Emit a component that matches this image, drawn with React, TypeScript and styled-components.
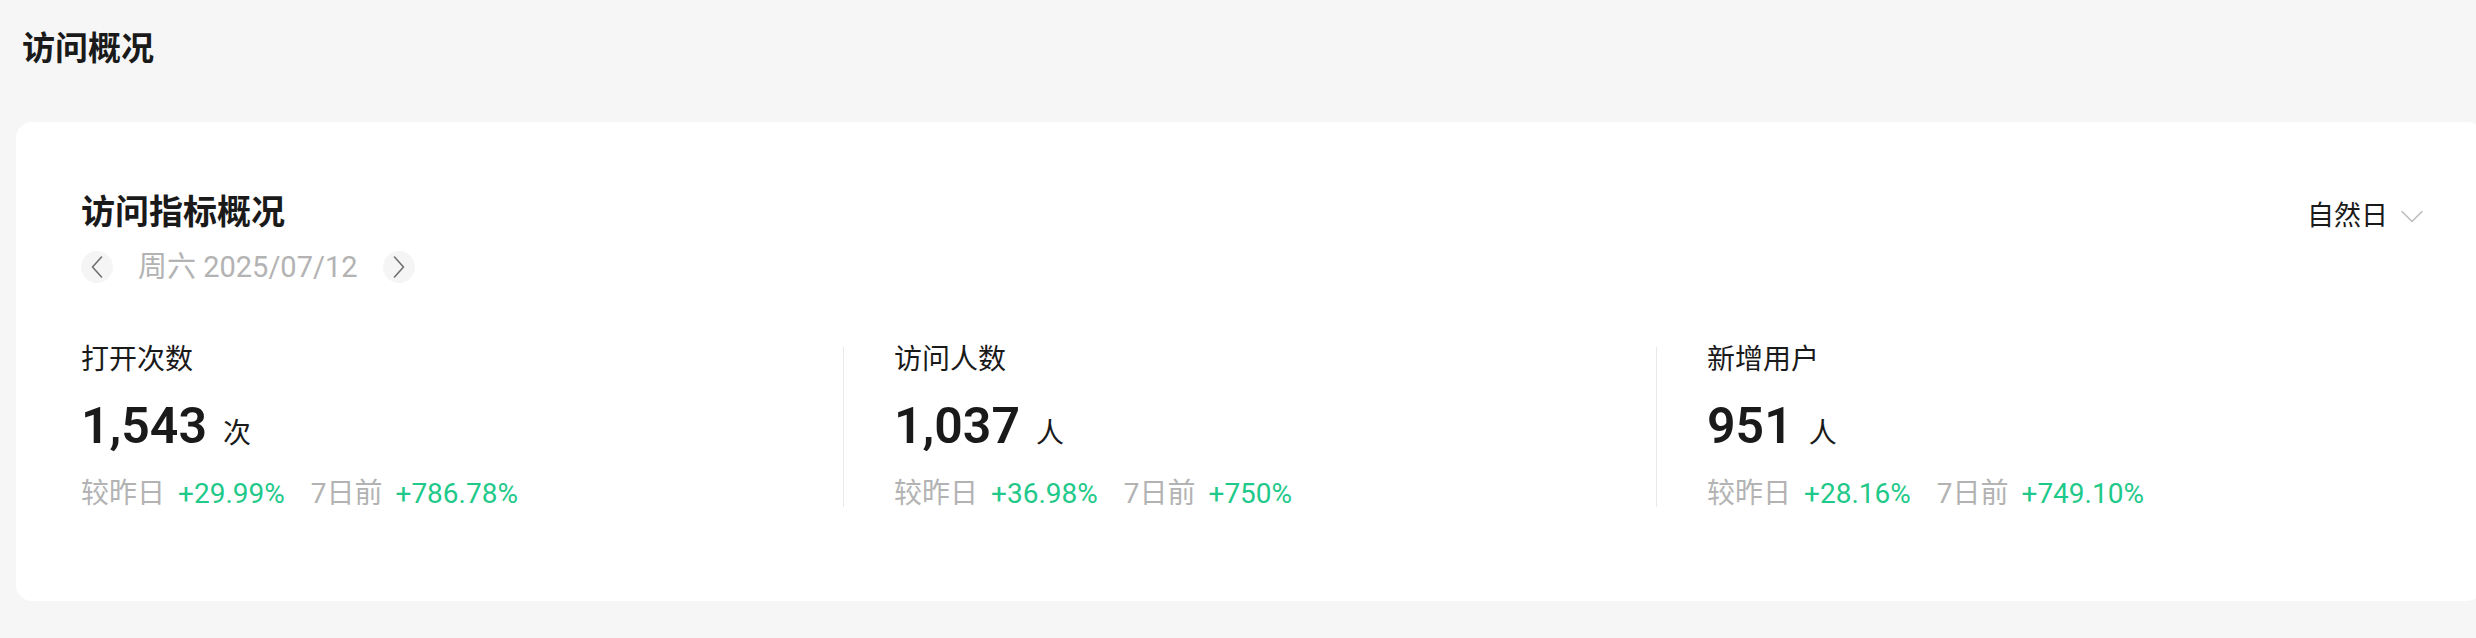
import React from "react";
import styled, { createGlobalStyle } from "styled-components";

const GlobalStyle = createGlobalStyle`
  html, body {
    margin: 0;
    padding: 0;
    background: #f6f6f6;
    overflow: hidden;
  }
  body {
    font-family: "Roboto", "Noto Sans CJK SC", sans-serif;
    color: #1a1a1a;
  }
  * { box-sizing: border-box; }
`;

const Page = styled.div`
  padding: 0 0 0 16px;
`;

const PageTitle = styled.h1`
  margin: 0;
  padding: 25px 0 0 6px;
  font-size: 33px;
  line-height: 48px;
  font-weight: 600;
  color: #1a1a1a;
`;

const Card = styled.section`
  margin-top: 49px;
  margin-right: -7px;
  background: #ffffff;
  border-radius: 16px;
  padding: 66px 64px 87px 65px;
`;

const CardHeader = styled.div`
  display: flex;
  justify-content: space-between;
  align-items: flex-start;
`;

const HeaderLeft = styled.div`
  display: flex;
  flex-direction: column;
`;

const CardTitle = styled.h2`
  margin: 0;
  font-size: 34px;
  line-height: 48px;
  font-weight: 600;
  color: #1a1a1a;
`;

const DateRow = styled.div`
  display: flex;
  align-items: center;
  margin-top: 15px;
`;

const CircleButton = styled.button`
  width: 32px;
  height: 32px;
  border: none;
  border-radius: 50%;
  background: #f5f5f5;
  padding: 0;
  display: flex;
  align-items: center;
  justify-content: center;
  cursor: pointer;
`;

const DateText = styled.span`
  margin: 0 25px;
  font-size: 29px;
  line-height: 32px;
  color: #b3b3b3;
`;

const Dropdown = styled.div`
  display: flex;
  align-items: center;
  gap: 13px;
  margin-top: 12px;
  margin-right: -4px;
  font-size: 27px;
  line-height: 32px;
  color: #1a1a1a;
  cursor: pointer;
`;

const Metrics = styled.div`
  display: flex;
  margin-top: 57px;
`;

const Metric = styled.div`
  flex: 1;
  display: flex;
  flex-direction: column;
`;

const Divider = styled.div`
  width: 1px;
  height: 160px;
  align-self: center;
  background: #e9e9e9;
  margin: 0 50px;
`;

const MetricLabel = styled.div`
  font-size: 28px;
  line-height: 40px;
  color: #1a1a1a;
`;

const ValueRow = styled.div`
  margin-top: 16px;
  display: flex;
  align-items: baseline;
  gap: 16px;
  line-height: 60px;
`;

const Value = styled.span`
  font-size: 50px;
  font-weight: 600;
  color: #1a1a1a;
`;

const Unit = styled.span`
  font-size: 28px;
  color: #1a1a1a;
`;

const CompareRow = styled.div`
  margin-top: 10px;
  display: flex;
  gap: 26px;
  font-size: 28px;
  line-height: 40px;
`;

const CompareItem = styled.div`
  display: flex;
  gap: 13px;
`;

const CompareLabel = styled.span`
  color: #b3b3b3;
`;

const CompareValue = styled.span<{ $up: boolean }>`
  color: ${(p) => (p.$up ? "#1fc98a" : "#f5504f")};
`;

const ChevronLeft = () => (
  <svg width="12" height="22" viewBox="0 0 12 22" fill="none">
    <path d="M10.5 1 L1.5 11 L10.5 21" stroke="#707070" strokeWidth="1.6" strokeLinecap="round" strokeLinejoin="round" />
  </svg>
);

const ChevronRight = () => (
  <svg width="12" height="22" viewBox="0 0 12 22" fill="none">
    <path d="M1.5 1 L10.5 11 L1.5 21" stroke="#707070" strokeWidth="1.6" strokeLinecap="round" strokeLinejoin="round" />
  </svg>
);

const ChevronDown = () => (
  <svg width="22" height="13" viewBox="0 0 22 13" fill="none">
    <path d="M1 1.5 L11 11.5 L21 1.5" stroke="#bdbdbd" strokeWidth="1.6" strokeLinecap="round" strokeLinejoin="round" />
  </svg>
);

type MetricData = {
  label: string;
  value: string;
  unit: string;
  day: string;
  week: string;
};

const metrics: MetricData[] = [
  { label: "打开次数", value: "1,543", unit: "次", day: "+29.99%", week: "+786.78%" },
  { label: "访问人数", value: "1,037", unit: "人", day: "+36.98%", week: "+750%" },
  { label: "新增用户", value: "951", unit: "人", day: "+28.16%", week: "+749.10%" },
];

export default function App() {
  return (
    <>
      <GlobalStyle />
      <Page>
        <PageTitle>访问概况</PageTitle>
        <Card>
          <CardHeader>
            <HeaderLeft>
              <CardTitle>访问指标概况</CardTitle>
              <DateRow>
                <CircleButton aria-label="前一天">
                  <ChevronLeft />
                </CircleButton>
                <DateText>周六 2025/07/12</DateText>
                <CircleButton aria-label="后一天">
                  <ChevronRight />
                </CircleButton>
              </DateRow>
            </HeaderLeft>
            <Dropdown>
              <span>自然日</span>
              <ChevronDown />
            </Dropdown>
          </CardHeader>
          <Metrics>
            {metrics.map((m, i) => (
              <React.Fragment key={m.label}>
                {i > 0 && <Divider />}
                <Metric>
                  <MetricLabel>{m.label}</MetricLabel>
                  <ValueRow>
                    <Value>{m.value}</Value>
                    <Unit>{m.unit}</Unit>
                  </ValueRow>
                  <CompareRow>
                    <CompareItem>
                      <CompareLabel>较昨日</CompareLabel>
                      <CompareValue $up>{m.day}</CompareValue>
                    </CompareItem>
                    <CompareItem>
                      <CompareLabel>7日前</CompareLabel>
                      <CompareValue $up>{m.week}</CompareValue>
                    </CompareItem>
                  </CompareRow>
                </Metric>
              </React.Fragment>
            ))}
          </Metrics>
        </Card>
      </Page>
    </>
  );
}
